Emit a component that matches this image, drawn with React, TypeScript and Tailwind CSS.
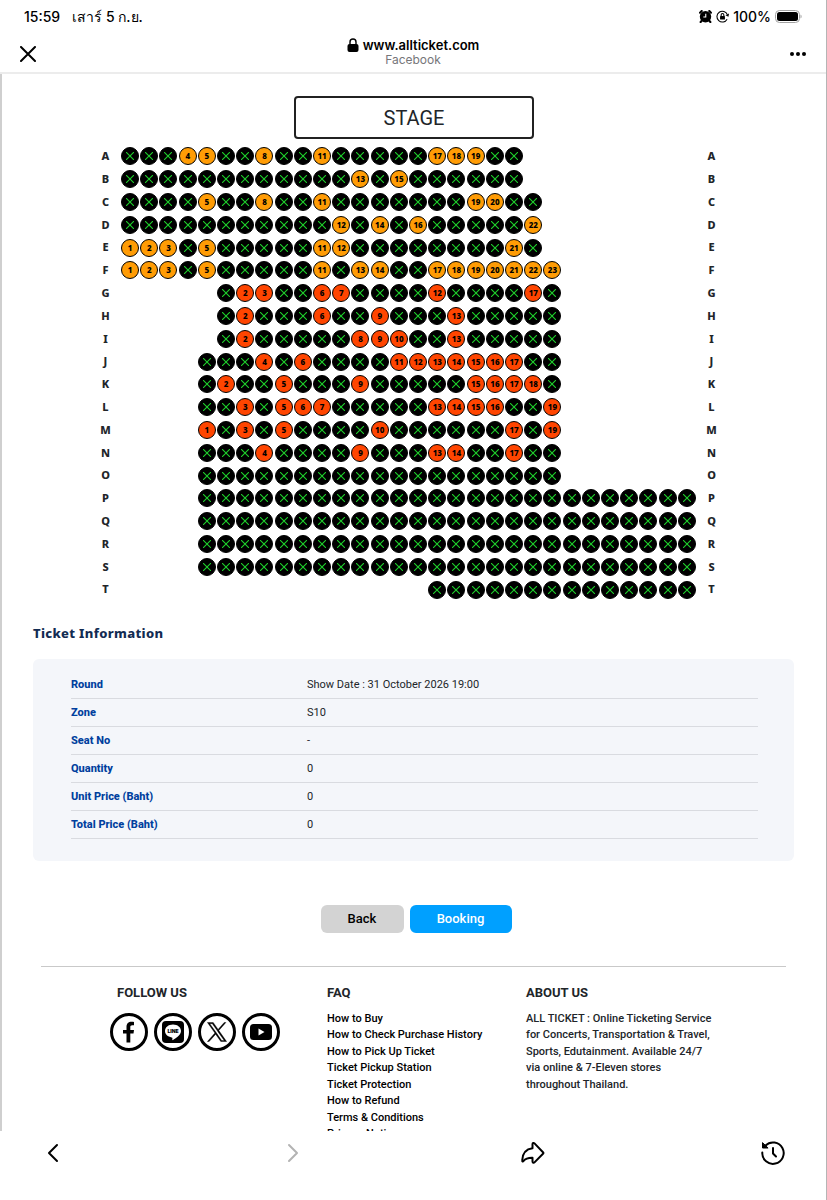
import * as React from "react";
import { clsx } from "clsx";

// ─── Types ─────────────────────────────────────────────────────────────────────

type Tier = "gold" | "red";

interface SeatRow {
  label: string;
  start: number; // first grid column of the row, zero based
  count: number;
  open: number[];
  tier: Tier;
}

// ─── Data ──────────────────────────────────────────────────────────────────────

const ROWS: SeatRow[] = [
  { label: "A", start: 0, count: 21, open: [4, 5, 8, 11, 17, 18, 19], tier: "gold" },
  { label: "B", start: 0, count: 21, open: [13, 15], tier: "gold" },
  { label: "C", start: 0, count: 22, open: [5, 8, 11, 19, 20], tier: "gold" },
  { label: "D", start: 0, count: 22, open: [12, 14, 16, 22], tier: "gold" },
  { label: "E", start: 0, count: 22, open: [1, 2, 3, 5, 11, 12, 21], tier: "gold" },
  { label: "F", start: 0, count: 23, open: [1, 2, 3, 5, 11, 13, 14, 17, 18, 19, 20, 21, 22, 23], tier: "gold" },
  { label: "G", start: 5, count: 18, open: [2, 3, 6, 7, 12, 17], tier: "red" },
  { label: "H", start: 5, count: 18, open: [2, 6, 9, 13], tier: "red" },
  { label: "I", start: 5, count: 18, open: [2, 8, 9, 10, 13], tier: "red" },
  { label: "J", start: 4, count: 19, open: [4, 6, 11, 12, 13, 14, 15, 16, 17], tier: "red" },
  { label: "K", start: 4, count: 19, open: [2, 5, 9, 15, 16, 17, 18], tier: "red" },
  { label: "L", start: 4, count: 19, open: [3, 5, 6, 7, 13, 14, 15, 16, 19], tier: "red" },
  { label: "M", start: 4, count: 19, open: [1, 3, 5, 10, 17, 19], tier: "red" },
  { label: "N", start: 4, count: 19, open: [4, 9, 13, 14, 17], tier: "red" },
  { label: "O", start: 4, count: 19, open: [], tier: "red" },
  { label: "P", start: 4, count: 26, open: [], tier: "red" },
  { label: "Q", start: 4, count: 26, open: [], tier: "red" },
  { label: "R", start: 4, count: 26, open: [], tier: "red" },
  { label: "S", start: 4, count: 26, open: [], tier: "red" },
  { label: "T", start: 16, count: 14, open: [], tier: "red" },
];

const TICKET_INFO = [
  ["Round", "Show Date : 31 October 2026 19:00"],
  ["Zone", "S10"],
  ["Seat No", "-"],
  ["Quantity", "0"],
  ["Unit Price (Baht)", "0"],
  ["Total Price (Baht)", "0"],
];

const FAQ_LINKS = [
  "How to Buy",
  "How to Check Purchase History",
  "How to Pick Up Ticket",
  "Ticket Pickup Station",
  "Ticket Protection",
  "How to Refund",
  "Terms & Conditions",
  "Privacy Notice",
];

// ─── Browser chrome ────────────────────────────────────────────────────────────

function StatusBar() {
  return (
    <div className="flex h-8 items-center justify-between px-6 text-[14px] font-medium">
      <div className="flex gap-3">
        <span>15:59</span>
        <span>เสาร์ 5 ก.ย.</span>
      </div>
      <div className="flex items-center gap-1">
        <svg width="13" height="13" viewBox="0 0 24 24">
          <circle cx="12" cy="12.5" r="10.500" />
          <path d="M2 5 5 2M22 5l-3-3M5 20l-2 2M19 20l2 2" stroke="#000" strokeWidth="4" strokeLinecap="round" />
          <path d="M12.500 7v6H8" fill="none" stroke="#fff" strokeWidth="2" />
        </svg>
        <svg width="13" height="13" viewBox="0 0 24 24" fill="none" stroke="#000" strokeWidth="2">
          <path d="M21 8.500A10 10 0 1 0 20.500 17" />
          <path d="m17.500 9.500 5.500 3 1-6z" fill="#000" stroke="none" />
          <rect x="7.500" y="11" width="9" height="6.500" rx="1" fill="#000" stroke="none" />
          <path d="M9.500 11V9a2.500 2.500 0 0 1 5 0v2" />
        </svg>
        <span>100%</span>
        <svg width="27" height="13" viewBox="0 0 27 13">
          <rect x="0.500" y="0.500" width="24" height="12" rx="4" fill="none" stroke="#a3a3a3" />
          <rect x="2" y="2" width="21" height="9" rx="2.500" />
          <path d="M25.500 4.500c1.500.8 1.500 3.200 0 4z" fill="#a3a3a3" />
        </svg>
      </div>
    </div>
  );
}

function AddressBar() {
  return (
    <div className="grid h-10 grid-cols-[1fr_auto_1fr] px-5">
      <button type="button" aria-label="Close" className="mt-1 w-4 justify-self-start">
        <svg width="16" height="16" viewBox="0 0 16 16" fill="none" stroke="#000" strokeWidth="2" strokeLinecap="round">
          <path d="m1 1 14 14M15 1 1 15" />
        </svg>
      </button>
      <div className="pt-[5px] text-center">
        <div className="flex items-center justify-center gap-1 text-[13px] leading-4 font-semibold">
          <svg width="12" height="14" viewBox="0 0 12 14">
            <rect x="0.500" y="6" width="11" height="8" rx="2" />
            <path d="M3 6.500V4a3 3 0 0 1 6 0v2.500" fill="none" stroke="#000" strokeWidth="1.400" />
          </svg>
          www.allticket.com
        </div>
        <div className="text-[12px] leading-[14px] text-[#76767a]">Facebook</div>
      </div>
      <button type="button" aria-label="More" className="mt-1 justify-self-end">
        <svg width="16" height="4" viewBox="0 0 16 4">
          <circle cx="2" cy="2" r="2" />
          <circle cx="8" cy="2" r="2" />
          <circle cx="14" cy="2" r="2" />
        </svg>
      </button>
    </div>
  );
}

function BottomBar() {
  return (
    <nav className="flex h-[69px] shrink-0 items-start justify-between bg-white pt-2.5 pr-[41px] pl-10">
      <button type="button" aria-label="Previous page">
        <svg width="24" height="24" viewBox="0 0 24 24" fill="none" stroke="#000" strokeWidth="2" strokeLinecap="round" strokeLinejoin="round">
          <path d="m17 4-8 8 8 8" />
        </svg>
      </button>
      <button type="button" aria-label="Next page">
        <svg width="24" height="24" viewBox="0 0 24 24" fill="none" stroke="#b3b3b3" strokeWidth="2" strokeLinecap="round" strokeLinejoin="round">
          <path d="m9 4 8 8-8 8" />
        </svg>
      </button>
      <button type="button" aria-label="Share">
        <svg width="24" height="24" viewBox="0 0 24 24" fill="none" stroke="#000" strokeWidth="2" strokeLinecap="round" strokeLinejoin="round">
          <path d="M11.500 3.200c0-1.200 1.200-1.600 2-.8l8.500 8.800q.8.800 0 1.600l-8.500 8.600c-.8.800-2 .4-2-.8v-3.800C7 16.700 4.500 17.500 2.600 20c-.7.900-1.500.6-1.400-.6C1.500 12.500 5 8 11.500 7.200z" />
        </svg>
      </button>
      <button type="button" aria-label="History">
        <svg width="24" height="24" viewBox="0 0 24 24" fill="none" stroke="#000" strokeWidth="2" strokeLinecap="round" strokeLinejoin="round">
          <path d="M1.300 11.500A10.700 10.700 0 1 0 4.500 4.500" />
          <path d="M1.500 2v5h5.200z" fill="#000" strokeWidth="1" />
          <path d="M12 7v5.500l3 3" />
        </svg>
      </button>
    </nav>
  );
}

// ─── Seat map ──────────────────────────────────────────────────────────────────

function Seat({ row, seat, isOpen }: { row: SeatRow; seat: number; isOpen: boolean }) {
  return (
    <button
      type="button"
      disabled={!isOpen}
      aria-label={`${row.label}${seat}`}
      className={clsx(
        "flex size-[18px] items-center justify-center justify-self-center rounded-full border border-black text-[8px] leading-none font-extrabold text-black",
        !isOpen && "bg-black",
        isOpen && row.tier === "gold" && "bg-[#ff9c05]",
        isOpen && row.tier === "red" && "bg-[#ff4500]"
      )}
      style={{ gridColumnStart: row.start + seat + 1 }}
    >
      {isOpen ? (
        seat
      ) : (
        <svg width="8" height="8" viewBox="0 0 8 8" fill="none" stroke="#1fd02c" strokeWidth="1.100">
          <path d="m0 0 8 8M8 0 0 8" />
        </svg>
      )}
    </button>
  );
}

function SeatMap() {
  return (
    <div className="pr-[11px]">
      <div className="mx-auto grid h-[456px] max-w-[636px] auto-rows-fr">
        {ROWS.map((row) => (
          <div
            key={row.label}
            className="grid grid-cols-[30px_repeat(30,minmax(0,1fr))_30px] items-center text-center font-['Noto_Sans',sans-serif] text-[11px] font-extrabold text-[#212529]"
          >
            <span className="col-start-1">{row.label}</span>
            {Array.from({ length: row.count }, (_, i) => (
              <Seat key={i} row={row} seat={i + 1} isOpen={row.open.includes(i + 1)} />
            ))}
            <span className="col-start-32">{row.label}</span>
          </div>
        ))}
      </div>
    </div>
  );
}

// ─── Ticket information ────────────────────────────────────────────────────────

function TicketInfo() {
  return (
    <section className="pr-8 pl-[31px]">
      <h2 className="font-['Noto_Sans',sans-serif] text-[13px] leading-5 font-extrabold tracking-wide text-[#122b52]">
        Ticket Information
      </h2>
      <div className="mt-4 rounded-md bg-[#f4f6fa] pt-[11px] pr-9 pb-[22px] pl-[38px]">
        <table className="w-full table-fixed text-left text-[11px] leading-4">
          <tbody>
            {TICKET_INFO.map(([label, value]) => (
              <tr key={label} className="h-7 border-b border-[#d9dbe0]">
                <th scope="row" className="w-[236px] pt-0.5 font-extrabold text-[#003f9e]">
                  {label}
                </th>
                <td className="pt-0.5 text-[#212529]">{value}</td>
              </tr>
            ))}
          </tbody>
        </table>
      </div>
    </section>
  );
}

// ─── Footer ────────────────────────────────────────────────────────────────────

function SocialLink({ label, children }: { label: string; children: React.ReactNode }) {
  return (
    <a
      href="#"
      aria-label={label}
      className="flex size-[38px] items-center justify-center rounded-full border-3 border-black"
    >
      {children}
    </a>
  );
}

function Footer() {
  return (
    <footer className="mr-10 ml-[39px] grid grid-cols-[286px_199px_1fr] border-t border-[#c9c9c9] pt-4 text-[11px] leading-normal font-medium text-[#212529]">
      <div className="pl-[69px]">
        <h3 className="pl-[7px] text-[13px] leading-5 font-bold">FOLLOW US</h3>
        <div className="mt-2.5 flex gap-1.5">
          <SocialLink label="Facebook">
            <svg width="14" height="22" viewBox="0 0 14 22">
              <path d="M4.500 21.500v-9H1V9h3.500V6c0-3.700 2-5.300 5-5.300 1.300 0 2.500.2 2.500.2v3.300h-1.700C8.800 4.200 8.300 5 8.300 6v3H12l-.5 3.500H8.300v9z" />
            </svg>
          </SocialLink>
          <SocialLink label="LINE">
            <svg width="22" height="22" viewBox="0 0 22 22">
              <rect width="22" height="22" rx="4" />
              <path d="M11 3.500c-4.600 0-8 2.900-8 6.500 0 3.300 2.700 5.800 6.700 6.400.9.200.8.500.6 2.300 0 .4.200.6.700.3 2.500-1.500 8-5 8-9 0-3.600-3.400-6.500-8-6.500z" fill="#fff" />
              <text x="11" y="12" textAnchor="middle" fontSize="5" fontWeight="900" fontFamily="Inter, sans-serif">
                LINE
              </text>
            </svg>
          </SocialLink>
          <SocialLink label="X">
            <svg width="20" height="20" viewBox="0 0 24 24">
              <path d="M14.200 10.200 22.700 0.500h-2l-7.400 8.400L7.400 0.500H0.500l9 12.800-9 10.200h2l7.900-8.900 6.200 8.900h6.900zM11.400 13.300l-.9-1.300L3.300 2h3.100l5.800 8.300.9 1.300 7.600 10.700h-3.100z" stroke="#000" strokeWidth="0.500" />
            </svg>
          </SocialLink>
          <SocialLink label="YouTube">
            <svg width="22" height="16" viewBox="0 0 22 16">
              <rect width="22" height="16" rx="3.500" />
              <path d="m8.500 4.500 6 3.500-6 3.500z" fill="#fff" />
            </svg>
          </SocialLink>
        </div>
      </div>
      <div>
        <h3 className="text-[13px] leading-5 font-bold">FAQ</h3>
        <ul className="mt-2 text-black">
          {FAQ_LINKS.map((link) => (
            <li key={link}>
              <a href="#">{link}</a>
            </li>
          ))}
        </ul>
      </div>
      <div>
        <h3 className="text-[13px] leading-5 font-bold">ABOUT US</h3>
        <p className="mt-2 max-w-[188px]">
          ALL TICKET : Online Ticketing Service for Concerts, Transportation &amp; Travel, Sports, Edutainment.
          Available 24/7 via online &amp; 7-Eleven stores throughout Thailand.
        </p>
      </div>
    </footer>
  );
}

// ─── Page ──────────────────────────────────────────────────────────────────────

export default function App() {
  return (
    <div className="flex h-screen flex-col border-r border-[#b5b5b5] bg-white font-[Inter,'Noto_Sans',sans-serif] text-black">
      <header className="shrink-0 border-b-2 border-[#ececec]">
        <StatusBar />
        <AddressBar />
      </header>
      <main className="min-h-0 flex-1 overflow-y-auto border-l-2 border-[#cfcfcf] font-[Roboto,'Noto_Sans',sans-serif] [scrollbar-width:none]">
        <div className="mx-auto mt-[22px] flex h-[43px] w-60 items-center justify-center rounded-sm border-2 border-[#212121] text-[20px] text-[#212529]">
          STAGE
        </div>
        <div className="mt-1.5">
          <SeatMap />
        </div>
        <div className="mt-[22px]">
          <TicketInfo />
        </div>
        <div className="mt-11 mb-[33px] ml-1 flex justify-center gap-1.5 text-[13px] font-medium">
          <button type="button" className="h-7 w-[83px] rounded-md bg-[#d3d3d3] text-black">
            Back
          </button>
          <button type="button" className="h-7 w-[102px] rounded-md bg-[#00a0ff] text-white">
            Booking
          </button>
        </div>
        <Footer />
      </main>
      <BottomBar />
    </div>
  );
}
